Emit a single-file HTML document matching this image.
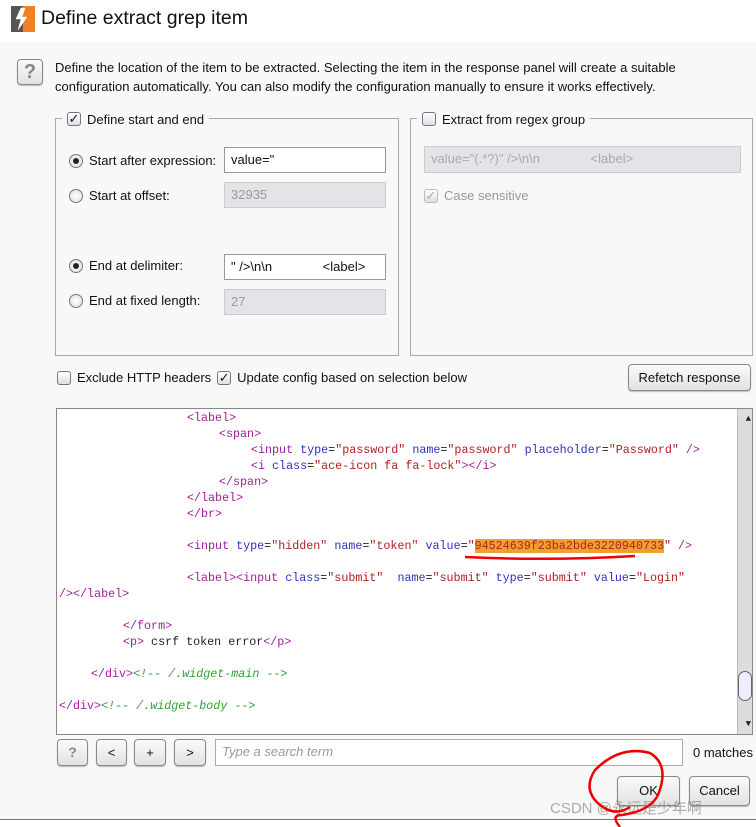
<!DOCTYPE html>
<html><head><meta charset="utf-8"><style>
*{box-sizing:border-box;margin:0;padding:0}
body{width:756px;height:827px;background:#f8f8f8;font-family:"Liberation Sans","DejaVu Sans",sans-serif;font-size:13px;color:#111;position:relative;overflow:hidden}
.a{position:absolute}
.title{left:0;top:0;width:756px;height:42px;background:#fff}
.grp{border:1px solid #a8a8a8}
.leg{background:#f8f8f8;padding:0 5px;display:flex;align-items:center;gap:6px;white-space:nowrap}
.cb{width:14px;height:14px;border:1px solid #777;border-radius:3px;background:linear-gradient(#fff,#dde);display:inline-block;position:relative;font-size:13px;line-height:12px;text-align:center;font-weight:bold}
.rb{width:14px;height:14px;border:1px solid #777;border-radius:50%;background:radial-gradient(#fff,#dde);}
.rb.on::after{content:"";position:absolute;left:3px;top:3px;width:6px;height:6px;border-radius:50%;background:#222}
.lab{white-space:nowrap}
.tf{border:1px solid #999;background:#fff;padding:0 6px;line-height:24px;white-space:pre}
.tf.dis{background:#e2e4e8;border-color:#ccc;color:#999}
.btn{border:1px solid #888;border-radius:4px;background:linear-gradient(#fafafa,#e2e2e2);text-align:center;box-shadow:0 1px 1px #bbb}
.code{left:56px;top:408px;width:697px;height:327px;background:#fff;border:1px solid #888;overflow:hidden;font-family:"Liberation Mono",monospace;font-size:11.7px;line-height:16px;color:#222}
.code .l{position:absolute;left:2px;white-space:pre;height:16px}
.t{color:#a020a0}.n{color:#3030c0}.v{color:#b02020}.c{color:#30a030;font-style:italic}
</style></head><body>
<div class="a title"></div>
<svg class="a" style="left:11px;top:6px" width="24" height="26"><rect width="24" height="26" fill="#555"/><path d="M12 0H24V26H12Z" fill="#f08020"/><path d="M10 2 L5 13 H10 L7 24 L16 11 H11 L14 2Z" fill="#fff" stroke="#fff" stroke-width="0.5"/></svg>
<div class="a" style="left:41px;top:7px;font-size:19.5px;color:#111">Define extract grep item</div>
<div class="a btn" style="left:17px;top:59px;width:26px;height:26px;font-size:20px;line-height:24px;color:#888;font-weight:bold">?</div>
<div class="a" style="left:55px;top:58px;line-height:19px;font-size:13px">Define the location of the item to be extracted. Selecting the item in the response panel will create a suitable<br>configuration automatically. You can also modify the configuration manually to ensure it works effectively.</div>

<div class="a grp" style="left:55px;top:118px;width:344px;height:238px"></div>
<div class="a leg" style="left:62px;top:111px;height:16px"><span class="cb">✓</span>Define start and end</div>
<div class="a rb on" style="left:69px;top:154px"></div><div class="a lab" style="left:89px;top:153px">Start after expression:</div>
<div class="a tf" style="left:224px;top:147px;width:162px;height:26px">value="</div>
<div class="a rb" style="left:69px;top:189px"></div><div class="a lab" style="left:89px;top:188px">Start at offset:</div>
<div class="a tf dis" style="left:224px;top:182px;width:162px;height:26px">32935</div>
<div class="a rb on" style="left:69px;top:259px"></div><div class="a lab" style="left:89px;top:258px">End at delimiter:</div>
<div class="a tf" style="left:224px;top:254px;width:162px;height:26px">" /&gt;\n\n              &lt;label&gt;</div>
<div class="a rb" style="left:69px;top:294px"></div><div class="a lab" style="left:89px;top:293px">End at fixed length:</div>
<div class="a tf dis" style="left:224px;top:289px;width:162px;height:26px">27</div>

<div class="a grp" style="left:410px;top:118px;width:343px;height:238px"></div>
<div class="a leg" style="left:417px;top:111px;height:16px"><span class="cb"></span>Extract from regex group</div>
<div class="a tf dis" style="left:424px;top:146px;width:317px;height:27px;color:#aaa">value="(.*?)" /&gt;\n\n              &lt;label&gt;</div>
<div class="a" style="left:424px;top:188px;display:flex;gap:6px;color:#999;align-items:center"><span class="cb" style="border-color:#bbb;color:#aaa">✓</span>Case sensitive</div>

<div class="a" style="left:57px;top:370px;display:flex;gap:6px;align-items:center;white-space:nowrap"><span class="cb"></span>Exclude HTTP headers <span class="cb">✓</span>Update config based on selection below</div>
<div class="a btn" style="left:628px;top:364px;width:123px;height:27px;line-height:25px">Refetch response</div>

<div class="a code">
<div class="l" style="top:1px;left:130px"><span class="t">&lt;label&gt;</span></div>
<div class="l" style="top:17px;left:162px"><span class="t">&lt;span&gt;</span></div>
<div class="l" style="top:33px;left:194px"><span class="t">&lt;input</span> <span class="n">type</span>=<span class="v">"password"</span> <span class="n">name</span>=<span class="v">"password"</span> <span class="n">placeholder</span>=<span class="v">"Password"</span> <span class="t">/&gt;</span></div>
<div class="l" style="top:49px;left:194px"><span class="t">&lt;i</span> <span class="n">class</span>=<span class="v">"ace-icon fa fa-lock"</span><span class="t">&gt;&lt;/i&gt;</span></div>
<div class="l" style="top:65px;left:162px"><span class="t">&lt;/span&gt;</span></div>
<div class="l" style="top:81px;left:130px"><span class="t">&lt;/label&gt;</span></div>
<div class="l" style="top:97px;left:130px"><span class="t">&lt;/br&gt;</span></div>
<div class="l" style="top:129px;left:130px"><span class="t">&lt;input</span> <span class="n">type</span>=<span class="v">"hidden"</span> <span class="n">name</span>=<span class="v">"token"</span> <span class="n">value</span>=<span class="v">"<span style="background:#f0a030">94524639f23ba2bde3220940733</span>"</span> <span class="t">/&gt;</span></div>
<div class="l" style="top:161px;left:130px"><span class="t">&lt;label&gt;&lt;input</span> <span class="n">class</span>=<span class="v">"submit"</span>  <span class="n">name</span>=<span class="v">"submit"</span> <span class="n">type</span>=<span class="v">"submit"</span> <span class="n">value</span>=<span class="v">"Login"</span></div>
<div class="l" style="top:177px;left:2px"><span class="t">/&gt;&lt;/label&gt;</span></div>
<div class="l" style="top:209px;left:66px"><span class="t">&lt;/form&gt;</span></div>
<div class="l" style="top:225px;left:66px"><span class="t">&lt;p&gt;</span> csrf token error<span class="t">&lt;/p&gt;</span></div>
<div class="l" style="top:257px;left:34px"><span class="t">&lt;/div&gt;</span><span class="c">&lt;!-- /.widget-main --&gt;</span></div>
<div class="l" style="top:289px;left:2px"><span class="t">&lt;/div&gt;</span><span class="c">&lt;!-- /.widget-body --&gt;</span></div>
<div class="a" style="right:0;top:0;width:15px;height:325px;background:#ddd;border-left:1px solid #bbb"></div>
<div class="a" style="right:1px;top:2px;font-size:9px">▲</div>
<div class="a" style="right:1px;bottom:2px;font-size:9px">▼</div>
<div class="a" style="right:0;top:262px;width:14px;height:30px;border:1px solid #666;border-radius:8px;background:#eef"></div>
</div>
<svg class="a" style="left:460px;top:550px" width="180" height="15"><path d="M5 7 Q90 11 175 6" stroke="#e00" stroke-width="2.5" fill="none"/></svg>

<div class="a btn" style="left:57px;top:739px;width:31px;height:27px;line-height:25px;color:#888;font-weight:bold;font-size:14px">?</div>
<div class="a btn" style="left:96px;top:739px;width:31px;height:27px;line-height:25px">&lt;</div>
<div class="a btn" style="left:134px;top:739px;width:32px;height:27px;line-height:25px">+</div>
<div class="a btn" style="left:174px;top:739px;width:32px;height:27px;line-height:25px">&gt;</div>
<div class="a tf" style="left:215px;top:739px;width:468px;height:27px;color:#999;font-style:italic;border-color:#aaa">Type a search term</div>
<div class="a" style="left:693px;top:745px;white-space:nowrap">0 matches</div>
<div class="a btn" style="left:617px;top:776px;width:63px;height:30px;line-height:28px">OK</div>
<div class="a btn" style="left:689px;top:776px;width:61px;height:30px;line-height:28px">Cancel</div>
<div class="a" style="left:0;top:819px;width:756px;height:1px;background:#777"></div>
<div class="a" style="left:0;top:820px;width:756px;height:7px;background:#fff"></div>
<div class="a" style="left:550px;top:797px;font-size:15px;color:rgba(120,120,120,.6);font-family:'Liberation Sans','Noto Sans CJK SC',sans-serif;white-space:nowrap">CSDN @永远是少年啊</div>
<svg class="a" style="left:580px;top:745px" width="100" height="82"><path d="M40 82 Q30 70 42 70 Q70 66 78 50 Q90 20 70 8 Q40 0 15 25 Q2 45 20 60 Q35 72 50 62" stroke="#e00" stroke-width="2.5" fill="none"/></svg>
</body></html>
